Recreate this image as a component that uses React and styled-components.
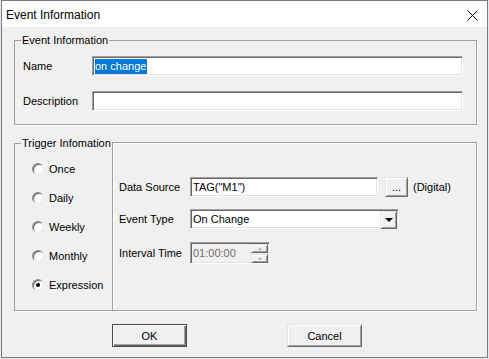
import React from 'react';
import styled, { createGlobalStyle } from 'styled-components';

const GlobalStyle = createGlobalStyle`
  html, body {
    margin: 0;
    padding: 0;
    background: #e6e9ed;
  }
  body {
    font-family: "Liberation Sans", Arial, sans-serif;
    font-size: 11px;
    color: #000;
  }
`;

const Window = styled.div`
  width: 487px;
  height: 358px;
  margin-left: 1px;
  box-sizing: border-box;
  border: 1px solid #7a7a7a;
  background: #f0f0f0;
  display: flex;
  flex-direction: column;
`;

const TitleBar = styled.div`
  height: 26px;
  box-sizing: border-box;
  flex: none;
  background: #fff;
  display: flex;
  align-items: center;
  justify-content: space-between;
  padding: 2px 9px 0 4px;
  font-size: 12px;
`;

const Body = styled.div`
  flex: 1;
  padding: 0 10px 0 12px;
  display: flex;
  flex-direction: column;
`;

const Group = styled.fieldset`
  margin: ${p => p.$top}px 0 0 0;
  padding: 0;
  min-width: 0;
  border: 1px solid #a0a0a0;
  box-shadow: 1px 1px 0 #fff;
`;

const Legend = styled.legend`
  margin-left: 6px;
  padding: 0 1px;
  line-height: 13px;
  font-size: 11px;
`;

const EventContent = styled.div`
  padding: 9px 13px 13px 8px;
  display: flex;
  flex-direction: column;
  gap: 15px;
`;

const Row = styled.div`
  display: flex;
  align-items: center;
  margin-top: ${p => p.$mt || 0}px;
`;

const Label = styled.span`
  flex: none;
  width: ${p => p.$w}px;
`;

const Sunken = styled.div`
  box-sizing: border-box;
  height: ${p => p.$h || 20}px;
  width: ${p => (p.$w ? `${p.$w}px` : 'auto')};
  flex: ${p => (p.$w ? 'none' : '1')};
  background: ${p => (p.$disabled ? '#f0f0f0' : '#fff')};
  border-style: solid;
  border-width: 1px;
  border-color: #a0a0a0 #fff #fff #a0a0a0;
  box-shadow: inset 1px 1px 0 #696969, inset -1px -1px 0 #e3e3e3;
  display: flex;
  align-items: center;
  padding: 0 0 0 2px;
  color: ${p => (p.$disabled ? '#6d6d6d' : '#000')};
  position: relative;
`;

const Selected = styled.span`
  background: #0078d7;
  color: #fff;
  padding: 0 1px 1px 0;
  line-height: 14px;
`;

const TriggerRow = styled.div`
  display: flex;
  align-items: flex-start;
`;

const RadioColumn = styled.div`
  width: 80px;
  flex: none;
  padding: 4px 0 0 17px;
  display: flex;
  flex-direction: column;
`;

const RadioRow = styled.label`
  height: 29px;
  display: flex;
  align-items: center;
  gap: 5px;
`;

const RadioCircle = styled.span`
  width: 12px;
  height: 12px;
  box-sizing: border-box;
  border-radius: 50%;
  background: #fff;
  border: 1px solid;
  border-color: #8a8a8a #e8e8e8 #e8e8e8 #8a8a8a;
  box-shadow: inset 1px 1px 0 #696969;
  display: flex;
  align-items: center;
  justify-content: center;

  &::after {
    content: '';
    width: 4px;
    height: 4px;
    border-radius: 50%;
    background: ${p => (p.$checked ? '#000' : 'transparent')};
  }
`;

const Panel = styled.div`
  flex: 1;
  box-sizing: border-box;
  height: 169px;
  margin: -8px -1px -1px 0;
  border: 1px solid #a0a0a0;
  box-shadow: inset 1px 1px 0 #fff;
  padding: 34px 0 0 6px;
`;

const Raised = styled.button`
  box-sizing: border-box;
  width: ${p => p.$w}px;
  height: ${p => p.$h}px;
  flex: none;
  margin: 0;
  padding: 0;
  background: #f0f0f0;
  font-family: inherit;
  font-size: 11px;
  color: #000;
  border: 1px solid;
  border-color: #e3e3e3 #696969 #696969 #e3e3e3;
  box-shadow: inset 1px 1px 0 #fff, inset -1px -1px 0 #a0a0a0;
  display: flex;
  align-items: center;
  justify-content: center;
`;

const DefaultButton = styled(Raised)`
  border-color: #4a4a4a;
  box-shadow: inset 1px 1px 0 #fff, inset -1px -1px 0 #696969, inset -2px -2px 0 #a0a0a0;
`;

const Note = styled.span`
  margin-left: 5px;
`;

const ComboButton = styled(Raised)`
  position: absolute;
  right: 1px;
  top: 1px;
`;

const SpinStack = styled.div`
  position: absolute;
  right: 1px;
  top: 1px;
  display: flex;
  flex-direction: column;
  gap: 1px;
`;

const Arrow = styled.span`
  width: 0;
  height: 0;
  border-left: ${p => p.$size}px solid transparent;
  border-right: ${p => p.$size}px solid transparent;
  border-${p => (p.$up ? 'bottom' : 'top')}: ${p => p.$size}px solid ${p => p.$color};
`;

const ButtonBar = styled.div`
  display: flex;
  gap: 100px;
  margin: 13px 0 0 98px;
`;

const radios = ['Once', 'Daily', 'Weekly', 'Monthly', 'Expression'];

export default function App() {
  return (
    <>
      <GlobalStyle />
      <Window>
        <TitleBar>
          <span>Event Information</span>
          <svg width="11" height="11" viewBox="0 0 11 11">
            <path d="M0.5 0.5 L10.5 10.5 M10.5 0.5 L0.5 10.5" stroke="#000" strokeWidth="1" />
          </svg>
        </TitleBar>
        <Body>
          <Group $top={7}>
            <Legend>Event Information</Legend>
            <EventContent>
              <Row>
                <Label $w={69}>Name</Label>
                <Sunken>
                  <Selected>on change</Selected>
                </Sunken>
              </Row>
              <Row>
                <Label $w={69}>Description</Label>
                <Sunken />
              </Row>
            </EventContent>
          </Group>
          <Group $top={12}>
            <Legend>Trigger Infomation</Legend>
            <TriggerRow>
              <RadioColumn>
                {radios.map(r => (
                  <RadioRow key={r}>
                    <RadioCircle $checked={r === 'Expression'} />
                    {r}
                  </RadioRow>
                ))}
              </RadioColumn>
              <Panel>
                <Row>
                  <Label $w={71}>Data Source</Label>
                  <Sunken $w={188}>TAG("M1")</Sunken>
                  <Raised $w={23} $h={20} style={{ marginLeft: 7 }}>...</Raised>
                  <Note>(Digital)</Note>
                </Row>
                <Row $mt={12}>
                  <Label $w={71}>Event Type</Label>
                  <Sunken $w={209}>
                    On Change
                    <ComboButton $w={17} $h={18}>
                      <Arrow $size={4} $color="#000" />
                    </ComboButton>
                  </Sunken>
                </Row>
                <Row $mt={13}>
                  <Label $w={71}>Interval Time</Label>
                  <Sunken $w={80} $h={22} $disabled>
                    01:00:00
                    <SpinStack>
                      <Raised $w={17} $h={9}>
                        <Arrow $up $size={2} $color="#a0a0a0" />
                      </Raised>
                      <Raised $w={17} $h={9}>
                        <Arrow $size={2} $color="#a0a0a0" />
                      </Raised>
                    </SpinStack>
                  </Sunken>
                </Row>
              </Panel>
            </TriggerRow>
          </Group>
          <ButtonBar>
            <DefaultButton $w={75} $h={23}>OK</DefaultButton>
            <Raised $w={75} $h={23}>Cancel</Raised>
          </ButtonBar>
        </Body>
      </Window>
    </>
  );
}
